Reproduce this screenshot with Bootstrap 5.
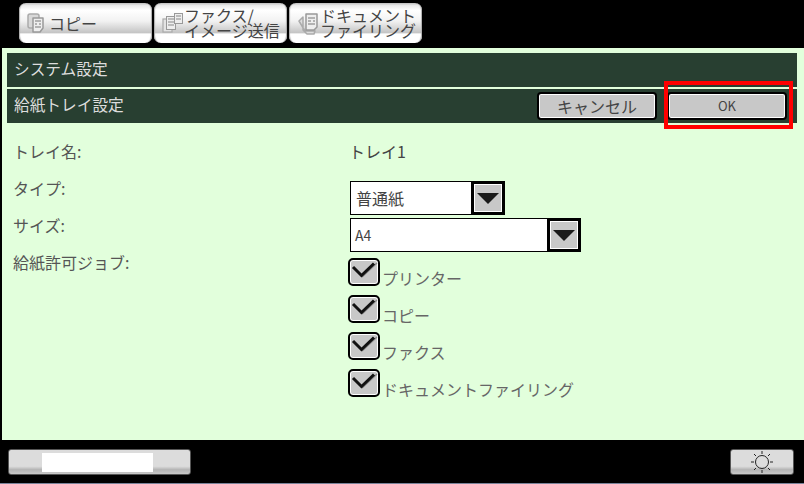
<!DOCTYPE html>
<html lang="ja"><head><meta charset="utf-8"><title>給紙トレイ設定</title>
<link href="https://cdn.jsdelivr.net/npm/bootstrap@5.3.0/dist/css/bootstrap.min.css" rel="stylesheet">
<style>
html,body{margin:0;height:484px;overflow:hidden;background:#000}
body{font-family:"Noto Sans CJK JP","Liberation Sans",sans-serif;font-size:16px;line-height:1;color:#444;width:804px;position:relative}
.tabbar{height:48px;padding:3px 0 5px 19px;gap:2px}
.tabbtn{width:133px;height:40px;border:0;border-radius:7px;background:linear-gradient(#bdbdbd 0,#e8e8e8 6%,#fff 18%,#f2f2f2 45%,#c8c8c8 72%,#c4c4c4 75%,#fff 77%,#fff 100%);box-shadow:inset 2px 0 1px -1px #aaa,inset -2px 0 1px -1px #aaa;color:#444;padding:0 0 0 8px;gap:1px;font-size:16px;line-height:15px}
.tabbtn svg{flex:none}
.tabgap{margin-left:3px}
.panelbox{height:392px;margin-left:2px;background:#e2ffdc;padding:5px 7px 0 5px}
.hbar{background:#283f31;color:#ddd;height:34px;margin-bottom:2px;padding:0 10px 2px 7px;font-size:15.7px}
.actions{margin-bottom:-2px}
.keybtn{width:120px;height:28px;background:#c8c8c8;border:2px solid #000;border-radius:4px;box-shadow:inset 0 0 0 1px #fff;color:#444;font-size:16px;padding:0}
.keybtn.okk{font-size:13px;margin-left:10px}
.formarea{padding:11px 0 0 6px}
.frow{height:37px}
.flabel{width:337px;flex:none;padding-top:7px;color:#555}
.plainval{padding-top:7px;color:#444;margin-left:-1px}
.selbox{height:34px;background:#fff;border:1px solid #000;margin-top:8px;padding-left:5px;font-size:16px}
.w1{width:155px}.w2{width:231px;font-size:14px;padding-left:4px}
.selarrow{width:34px;height:34px;margin:-1px -1px -1px auto;background:#c8c8c8;border:3px solid #000;box-shadow:inset 0 0 0 1px #fff}
.selarrow svg{display:block}
.chkcol{margin-left:-2px;margin-top:11px}
.chkrow{height:37px}
.chkbox{width:32px;height:28px;flex:none;background:#c8c8c8;border:2px solid #000;border-radius:5px;box-shadow:inset 0 0 0 1px #fff;margin-right:2px}
.chklabel{padding-top:12px;color:#666;font-size:16px}
.footbar{height:43px;padding:9px 10px 0 8px}
.footbtn{height:26px;border:1px solid #555;border-radius:3px;background:linear-gradient(#dcdcdc 0,#dcdcdc 68%,#b4b4b4 82%,#c8c8c8 100%)}
.w183{width:183px;padding:3px 0 0 33px}
.w64{width:64px}
.whitebar{width:111px;height:19px;background:#fff}
.edgeline{height:1px;background:#79839a}
.redmark{position:absolute;left:664px;top:81px;width:129px;height:48px;border:4px solid #f00;pointer-events:none}
</style></head>
<body>
<div class="d-flex tabbar">
<button class="btn tabbtn d-flex align-items-center text-start"><svg width="18" height="20" viewBox="0 0 18 20"><rect x="1" y="1" width="11" height="14" rx="2" fill="#d8d8d8" stroke="#aaa" stroke-width="1.5"/><path d="M6 5h10v10l-3 4H6z" fill="#eee" stroke="#999" stroke-width="1.5" stroke-linejoin="round"/><path d="M8 8h6M8 11h2M12 11h2M8 14h6" stroke="#777"/></svg><span class="tabgap">コピー</span></button>
<button class="btn tabbtn d-flex align-items-center text-start"><svg width="21" height="22" viewBox="0 0 21 22"><rect x="1" y="7" width="9" height="13" fill="#e4e4e4" stroke="#aaa" stroke-width="1.2"/><rect x="4.5" y="4.5" width="9" height="13" fill="#eee" stroke="#999"/><path d="M6 7h6M6 10h6M6 13h6" stroke="#888"/><rect x="12.5" y="1.5" width="8" height="10" fill="#eee" stroke="#999"/><path d="M14 4h5M14 7h5" stroke="#888"/></svg><span>ファクス/<br>イメージ送信</span></button>
<button class="btn tabbtn d-flex align-items-center text-start"><svg width="22" height="23" viewBox="0 0 22 23"><path d="M2 9l4-4v13l4 4h7l1-3H8z" fill="#ddd" stroke="#aaa" stroke-width="1.5" stroke-linejoin="round"/><path d="M9 2h11v13l-3 3H9z" fill="#eee" stroke="#999" stroke-width="1.5" stroke-linejoin="round"/><path d="M11 6h7M11 9h3M16 9h2M11 12h7" stroke="#777"/></svg><span>ドキュメント<br>ファイリング</span></button>
</div>
<div class="panelbox">
<div class="hbar d-flex align-items-center">システム設定</div>
<div class="hbar d-flex align-items-center justify-content-between"><span>給紙トレイ設定</span><span class="actions d-flex align-items-center"><button class="btn keybtn">キャンセル</button><button class="btn keybtn okk">OK</button></span></div>
<div class="formarea">
<div class="d-flex frow"><div class="flabel">トレイ名:</div><div class="plainval">トレイ1</div></div>
<div class="d-flex frow"><div class="flabel">タイプ:</div><div class="selbox w1 d-flex align-items-center">普通紙<span class="selarrow"><svg width="28" height="28" viewBox="0 0 28 28"><path d="M3 9h22L14 20z" fill="#1a1a1a"/></svg></span></div></div>
<div class="d-flex frow"><div class="flabel">サイズ:</div><div class="selbox w2 d-flex align-items-center">A4<span class="selarrow"><svg width="28" height="28" viewBox="0 0 28 28"><path d="M3 9h22L14 20z" fill="#1a1a1a"/></svg></span></div></div>
<div class="d-flex"><div class="flabel">給紙許可ジョブ:</div><div class="chkcol">
<div class="d-flex chkrow"><span class="chkbox"><svg width="28" height="24" viewBox="0 0 28 24"><path d="M12 17L27 3" stroke="#8a8a8a" stroke-width="1.500"/><path d="M3 7l8.500 8.500L24 3.500" fill="none" stroke="#111" stroke-width="3"/></svg></span><span class="chklabel">プリンター</span></div>
<div class="d-flex chkrow"><span class="chkbox"><svg width="28" height="24" viewBox="0 0 28 24"><path d="M12 17L27 3" stroke="#8a8a8a" stroke-width="1.500"/><path d="M3 7l8.500 8.500L24 3.500" fill="none" stroke="#111" stroke-width="3"/></svg></span><span class="chklabel">コピー</span></div>
<div class="d-flex chkrow"><span class="chkbox"><svg width="28" height="24" viewBox="0 0 28 24"><path d="M12 17L27 3" stroke="#8a8a8a" stroke-width="1.500"/><path d="M3 7l8.500 8.500L24 3.500" fill="none" stroke="#111" stroke-width="3"/></svg></span><span class="chklabel">ファクス</span></div>
<div class="d-flex chkrow"><span class="chkbox"><svg width="28" height="24" viewBox="0 0 28 24"><path d="M12 17L27 3" stroke="#8a8a8a" stroke-width="1.500"/><path d="M3 7l8.500 8.500L24 3.500" fill="none" stroke="#111" stroke-width="3"/></svg></span><span class="chklabel">ドキュメントファイリング</span></div>
</div></div>
</div>
</div>
<div class="d-flex justify-content-between footbar">
<div class="footbtn w183"><div class="whitebar"></div></div>
<div class="footbtn w64 d-flex align-items-center justify-content-center"><svg width="24" height="24" viewBox="0 0 24 24"><circle cx="12" cy="12" r="6.500" fill="none" stroke="#222"/><path d="M12 1v3M12 20v3M1 12h3M20 12h3M4 4l2 2M18 18l2 2M4 20l2-2M18 6l2-2" stroke="#222"/></svg></div>
</div>
<div class="edgeline"></div>
<div class="redmark"></div>
</body></html>
